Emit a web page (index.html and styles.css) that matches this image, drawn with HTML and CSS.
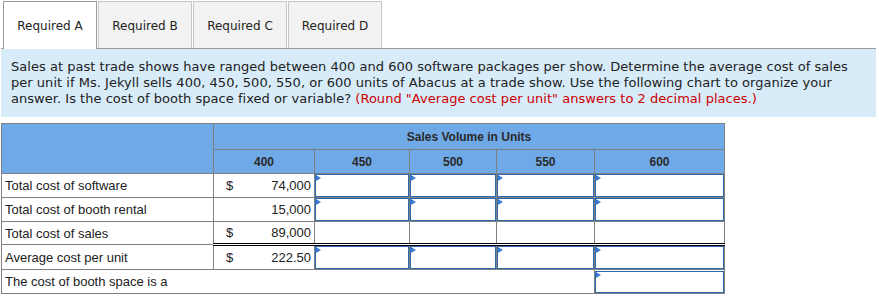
FILE: index.html
```html
<!DOCTYPE html>
<html>
<head>
<meta charset="utf-8">
<link rel="stylesheet" href="styles.css">
</head>
<body>
<div class="page">
  <div class="tabs">
    <div class="tab active">Required A</div>
    <div class="tab">Required B</div>
    <div class="tab">Required C</div>
    <div class="tab">Required D</div>
  </div>
  <div class="question">Sales at past trade shows have ranged between 400 and 600 software packages per show. Determine the average cost of sales per unit if Ms. Jekyll sells 400, 450, 500, 550, or 600 units of Abacus at a trade show. Use the following chart to organize your answer. Is the cost of booth space fixed or variable? <span class="red">(Round "Average cost per unit" answers to 2 decimal places.)</span></div>
  <table class="grid">
    <colgroup>
      <col class="c-label"><col class="c-400"><col class="c-450"><col class="c-500"><col class="c-550"><col class="c-600">
    </colgroup>
    <thead>
      <tr class="h1">
        <th rowspan="2"></th>
        <th colspan="5">Sales Volume in Units</th>
      </tr>
      <tr class="h2">
        <th>400</th><th>450</th><th>500</th><th>550</th><th>600</th>
      </tr>
    </thead>
    <tbody>
      <tr>
        <td class="label">Total cost of software</td>
        <td class="val"><div class="money"><span>$</span><span>74,000</span></div></td>
        <td class="in"><div class="box"><i class="tri"></i></div></td>
        <td class="in"><div class="box"><i class="tri"></i></div></td>
        <td class="in"><div class="box"><i class="tri"></i></div></td>
        <td class="in"><div class="box"><i class="tri"></i></div></td>
      </tr>
      <tr>
        <td class="label">Total cost of booth rental</td>
        <td class="val"><div class="money"><span></span><span>15,000</span></div></td>
        <td class="in"><div class="box"><i class="tri"></i></div></td>
        <td class="in"><div class="box"><i class="tri"></i></div></td>
        <td class="in"><div class="box"><i class="tri"></i></div></td>
        <td class="in"><div class="box"><i class="tri"></i></div></td>
      </tr>
      <tr class="sum">
        <td class="label">Total cost of sales</td>
        <td class="val"><div class="money"><span>$</span><span>89,000</span></div></td>
        <td></td><td></td><td></td><td></td>
      </tr>
      <tr class="avg">
        <td class="label">Average cost per unit</td>
        <td class="val"><div class="money"><span>$</span><span>222.50</span></div></td>
        <td class="in"><div class="box"><i class="tri"></i></div></td>
        <td class="in"><div class="box"><i class="tri"></i></div></td>
        <td class="in"><div class="box"><i class="tri"></i></div></td>
        <td class="in"><div class="box"><i class="tri"></i></div></td>
      </tr>
      <tr class="last">
        <td class="label" colspan="5">The cost of booth space is a</td>
        <td class="in"><div class="box short"><i class="tri"></i></div></td>
      </tr>
    </tbody>
  </table>
</div>
</body>
</html>
```
FILE: styles.css
```css
html, body {
  margin: 0;
  padding: 0;
  background: #fff;
}
.page {
  padding: 1px 3px 0 1px;
}
.tabs {
  display: flex;
  gap: 1px;
  padding-left: 2px;
  border-bottom: 1px solid #9a9a9a;
  height: 47px;
}
.tab {
  box-sizing: border-box;
  width: 94px;
  height: 47px;
  border: 1px solid #c6c6c6;
  border-bottom: none;
  background: #f2f2f2;
  font-family: "DejaVu Sans", Verdana, sans-serif;
  font-size: 12px;
  color: #222;
  display: flex;
  align-items: center;
  justify-content: center;
  padding-top: 1px;
}
.tab.active {
  background: #fff;
  border-color: #9a9a9a;
  height: 48px;
  position: relative;
  z-index: 1;
}
.question {
  background: #d7ebf9;
  font-family: "DejaVu Sans", Verdana, sans-serif;
  font-size: 13px;
  line-height: 16px;
  color: #222;
  padding: 10px 14px 10px 10px;
  height: 48px;
  letter-spacing: 0.03px;
}
.red { color: #cc0000; }

.grid {
  margin-top: 6px;
  border-collapse: collapse;
  table-layout: fixed;
  width: 723px;
  font-family: "Liberation Sans", Arial, sans-serif;
  font-size: 13px;
  color: #222;
}
.c-label { width: 212px; }
.c-400 { width: 101px; }
.c-450 { width: 95px; }
.c-500 { width: 87px; }
.c-550 { width: 98px; }
.c-600 { width: 130px; }

.grid th, .grid td {
  border: 1px solid #808080;
  padding: 0;
}
.grid th {
  background: #6fa9e7;
  font-size: 12px;
  font-weight: bold;
  color: #2a2a2a;
  text-align: center;
}
.h1 th { height: 25px; }
.h2 th { height: 23px; }
.grid td { height: 23px; }
.grid .sum td { height: 21px; }
.label { padding-left: 3px !important; }
.money {
  display: flex;
  justify-content: space-between;
  padding: 0 3px 0 12px;
}
.sum td:not(.label) { border-top: 1px solid #000; }
.avg td:not(.label) { border-top: 3px double #000; }
.in { position: relative; }
.box {
  box-sizing: border-box;
  height: 23px;
  border: 1px solid #3068b0;
  position: relative;
}
.box.short { height: 22px; }
.tri {
  position: absolute;
  left: 0;
  top: 0;
  width: 0;
  height: 0;
  border-top: 3px solid transparent;
  border-bottom: 3px solid transparent;
  border-left: 5px solid #3a7bd5;
}
```
